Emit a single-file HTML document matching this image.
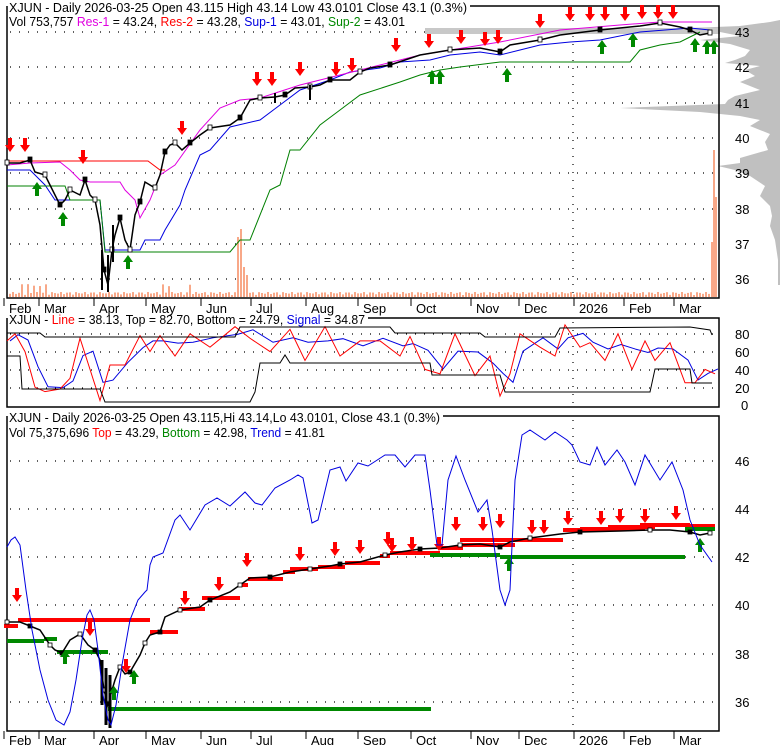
<!DOCTYPE html>
<html><head><meta charset="utf-8"><style>
html,body{margin:0;padding:0;background:#fff;}
body{width:780px;height:745px;overflow:hidden;position:relative;font-family:"Liberation Sans",sans-serif;}
svg{position:absolute;left:0;top:0;}
text{font-family:"Liberation Sans",sans-serif;font-size:13px;}
</style></head><body>
<svg id="s" width="780" height="745" viewBox="0 0 780 745">
<g id="bg"></g>
<g fill="none" stroke="#000" stroke-width="1.5">
<polyline points="7,6 7,298 719,298 719,6 470,6"/>
<polyline points="7,318 7,407 719,407 719,318 368,318"/>
<polyline points="7,416 7,731 719,731 719,416 443,416"/>
</g>
<g id="g"></g>
<text x="9" y="12" textLength="458" lengthAdjust="spacingAndGlyphs">XJUN - Daily 2026-03-25 Open 43.115  High 43.14  Low 43.0101  Close 43.1 (0.3%)</text>
<text x="9" y="26" textLength="396" lengthAdjust="spacingAndGlyphs">Vol 753,757 <tspan fill="#e000e0">Res-1</tspan> = 43.24, <tspan fill="#f00">Res-2</tspan> = 43.28, <tspan fill="#0000e0">Sup-1</tspan> = 43.01, <tspan fill="#080">Sup-2</tspan> = 43.01</text>
<text x="9" y="324" textLength="356" lengthAdjust="spacingAndGlyphs">XJUN - <tspan fill="#f00">Line</tspan> = 38.13, Top = 82.70, Bottom = 24.79, <tspan fill="#0000e0">Signal</tspan> = 34.87</text>
<text x="9" y="422" textLength="431" lengthAdjust="spacingAndGlyphs">XJUN - Daily 2026-03-25 Open 43.115,Hi 43.14,Lo 43.0101, Close 43.1 (0.3%)</text>
<text x="9" y="437" textLength="316" lengthAdjust="spacingAndGlyphs">Vol 75,375,696 <tspan fill="#f00">Top</tspan> = 43.29, <tspan fill="#080">Bottom</tspan> = 42.98, <tspan fill="#0000e0">Trend</tspan> = 41.81</text>
<g fill="#000">
<text x="735" y="37">43</text><text x="735" y="72">42</text><text x="735" y="108">41</text><text x="735" y="143">40</text><text x="735" y="178">39</text><text x="735" y="214">38</text><text x="735" y="249">37</text><text x="735" y="284">36</text>
<text x="735" y="339">80</text><text x="735" y="357">60</text><text x="735" y="375">40</text><text x="735" y="393">20</text><text x="741" y="410">0</text>
<text x="735" y="466">46</text><text x="735" y="514">44</text><text x="735" y="562">42</text><text x="735" y="610">40</text><text x="735" y="659">38</text><text x="735" y="707">36</text>
</g>
<g id="xl"></g>
</svg>
<script>
var NS="http://www.w3.org/2000/svg",G=document.getElementById('g'),BG=document.getElementById('bg');
function el(p,t,a,txt){var e=document.createElementNS(NS,t);for(var k in a)e.setAttribute(k,a[k]);if(txt)e.textContent=txt;p.appendChild(e);return e;}
function pl(pts,c,w,p){el(p||G,'polyline',{points:pts.map(function(q){return q.join(',')}).join(' '),fill:'none',stroke:c,'stroke-width':w||1});}
function dots(y){el(BG,'line',{x1:10,x2:716,y1:y,y2:y,stroke:'#000','stroke-dasharray':'1 8','stroke-width':1.2});}
[32,67,103,138,173,209,244,279].forEach(dots);
[334,352,370,388].forEach(dots);
[461,509,557,605,654,702].forEach(dots);
[[20,298],[322,405],[420,731]].forEach(function(r){el(BG,'line',{x1:573,x2:573,y1:r[0],y2:r[1],stroke:'#000','stroke-dasharray':'1 7','stroke-width':1.2});});
var prof=[[22,770],[26,740],[28,690],[32,720],[36,740],[40,700],[44,730],[50,750],[56,745],[60,735],[63,725],[66,760],[70,745],[76,755],[82,740],[90,760],[96,735],[100,728],[104,725],[108,620],[112,700],[116,740],[120,760],[126,750],[134,770],[142,765],[150,768],[158,740],[163,740],[166,718],[170,735],[176,750],[186,765],[196,760],[206,770],[216,772],[226,770],[240,775],[260,778],[285,778]];
var d='M780,20 ';prof.forEach(function(p){d+='L'+p[1]+','+p[0]+' ';});d+='L780,285 Z';
el(BG,'path',{d:d,fill:'#c0c0c0'});
el(BG,'rect',{x:425,y:28,width:295,height:6,fill:'#c8c8c8'});
for(var x=9;x<716;x+=3){var h=2+Math.abs(Math.sin(x*1.7))*3;if(x<60&&Math.sin(x)>0.7)h+=8;if(x>150&&x<200&&Math.sin(x*3)>0.8)h+=8;
el(G,'rect',{x:x,y:297-h,width:2,height:h,fill:'#f8a888'});}
[[237,60],[240,68],[243,30],[246,22],[711,55],[713,147],[715,100]].forEach(function(v){el(G,'rect',{x:v[0],y:297-v[1],width:2,height:v[1],fill:'#f8a888'});});
pl([[7,170],[30,170],[45,185],[55,200],[100,200],[105,250],[140,250],[145,240],[160,240],[165,230],[180,205],[185,190],[200,155],[210,150],[230,127],[260,120],[280,105],[300,90],[330,80],[350,72],[380,68],[400,62],[430,60],[450,55],[480,52],[500,55],[520,50],[540,45],[570,42],[600,40],[640,32],[690,28],[710,30]],'#0000e0');
pl([[7,186],[65,186],[70,200],[100,200],[105,252],[230,252],[240,240],[250,240],[270,190],[280,185],[290,150],[300,150],[320,125],[340,110],[360,95],[400,82],[420,75],[440,70],[460,67],[500,62],[630,62],[640,50],[660,45],[680,42],[700,32]],'#008000');
pl([[7,161],[148,161],[160,170],[165,170]],'#f00');
pl([[7,165],[30,163],[60,162],[70,170],[80,180],[90,182],[120,182],[125,190],[135,200],[140,218],[150,200],[160,175],[175,165],[200,130],[220,108],[240,100],[260,98],[300,85],[360,70],[420,55],[500,42],[560,30],[620,25],[660,22],[712,22]],'#e000e0');
var tp=[[7,163],[20,163],[30,160],[35,172],[45,175],[55,195],[60,205],[65,200],[70,190],[80,195],[85,180],[90,195],[95,200],[100,225],[104,270],[108,285],[112,250],[115,235],[120,218],[125,240],[130,250],[135,215],[140,202],[145,182],[155,188],[160,175],[165,152],[170,145],[175,143],[182,150],[190,143],[200,135],[210,128],[230,125],[240,118],[250,100],[260,98],[275,97],[285,95],[295,88],[310,87],[320,85],[330,80],[350,80],[360,72],[370,68],[390,65],[420,55],[450,50],[480,48],[500,52],[510,45],[540,40],[560,35],[600,30],[640,26],[660,23],[680,27],[690,30],[700,35],[710,33]];
pl(tp,'#000',1.5);
tp.forEach(function(q,i){if(i%2)return;el(G,'rect',{x:q[0]-2,y:q[1]-3,width:4,height:5,fill:(i%4?'#000':'#fff'),stroke:'#000','stroke-width':0.8});});
[[102,250,290],[108,255,292],[113,225,262],[275,93,103],[310,85,100]].forEach(function(c){el(G,'rect',{x:c[0]-1,y:c[1],width:2,height:c[2]-c[1],fill:'#000'});});
function da(x,y){el(G,'path',{d:'M'+(x-2)+','+y+'h4v7h3l-5,7l-5,-7h3z',fill:'#f00'});}
function ua(x,y){el(G,'path',{d:'M'+(x-2)+','+(y+14)+'h4v-7h3l-5,-7l-5,7h3z',fill:'#080'});}
[[10,138],[25,138],[83,150],[182,121],[257,72],[272,72],[300,62],[336,62],[352,58],[396,38],[429,34],[461,30],[485,32],[498,30],[540,14],[570,7],[590,7],[605,7],[625,7],[642,5],[658,5],[673,5]].forEach(function(a){da(a[0],a[1]);});
[[37,182],[63,212],[128,255],[432,70],[440,70],[507,68],[602,40],[633,33],[695,38],[707,40],[714,40]].forEach(function(a){ua(a[0],a[1]);});
function seg(x1,x2,y,c){el(G,'rect',{x:x1,y:y-2,width:x2-x1,height:4,fill:c});}
seg(4,18,626,'#f00');seg(18,150,620,'#f00');seg(150,178,632,'#f00');seg(179,205,609,'#f00');seg(202,240,598,'#f00');seg(238,248,585,'#f00');seg(248,283,579,'#f00');seg(283,295,572,'#f00');seg(290,318,569,'#f00');seg(318,345,567,'#f00');seg(345,380,563,'#f00');
seg(380,390,556,'#f00');seg(390,440,553,'#f00');seg(440,463,548,'#f00');seg(458,515,545,'#f00');seg(460,563,540,'#f00');seg(563,605,530,'#f00');seg(580,645,529,'#f00');seg(608,655,527,'#f00');seg(640,690,525,'#f00');seg(690,715,526,'#f00');
seg(7,44,641,'#080');seg(44,57,639,'#080');seg(57,108,652,'#080');seg(108,431,709,'#080');seg(430,500,555,'#080');seg(500,685,557,'#080');seg(685,715,529,'#080');
var bp=[[7,622],[20,622],[30,626],[40,630],[50,645],[55,650],[62,653],[70,640],[80,634],[88,645],[95,650],[100,660],[104,690],[108,705],[112,690],[115,680],[120,667],[125,674],[130,672],[140,655],[145,643],[150,635],[160,632],[165,617],[180,610],[200,607],[210,600],[230,592],[240,585],[250,578],[270,577],[290,572],[310,569],[330,566],[340,564],[360,562],[385,555],[400,552],[420,549],[440,548],[460,545],[480,544],[500,547],[510,542],[530,538],[560,534],[580,532],[620,531],[650,530],[670,530],[690,532],[700,535],[710,533]];
pl(bp,'#000',1.5);
bp.forEach(function(q,i){if(i%2)return;el(G,'rect',{x:q[0]-2,y:q[1]-2,width:4,height:4,fill:(i%4?'#000':'#fff'),stroke:'#000','stroke-width':0.8});});
[[102,660,705],[106,668,725],[110,675,728]].forEach(function(c){el(G,'rect',{x:c[0]-1.5,y:c[1],width:3,height:c[2]-c[1],fill:'#000'});});
[[17,588],[90,622],[126,659],[185,591],[219,577],[247,553],[300,547],[335,542],[360,540],[388,532],[392,538],[412,537],[439,537],[456,517],[483,517],[500,514],[532,520],[544,520],[568,511],[601,511],[620,509],[645,509],[676,506]].forEach(function(a){da(a[0],a[1]);});
[[65,650],[114,686],[134,670],[509,557],[700,538]].forEach(function(a){ua(a[0],a[1]);});
pl([[7,547],[11,540],[15,537],[20,545],[26,590],[32,630],[40,670],[48,700],[56,720],[64,725],[70,712],[76,680],[82,640],[87,615],[90,610],[94,620],[98,650],[103,695],[108,720],[111,725],[116,705],[122,665],[130,620],[138,600],[145,592],[147,590],[150,565],[153,557],[163,553],[175,520],[180,515],[190,530],[205,505],[217,498],[230,506],[245,492],[255,503],[262,505],[275,488],[290,480],[298,475],[303,478],[312,523],[318,520],[330,470],[340,467],[346,481],[358,463],[368,466],[385,455],[395,455],[405,467],[415,455],[425,455],[430,490],[437,545],[442,545],[448,480],[456,456],[465,480],[478,512],[487,500],[492,530],[500,590],[505,605],[510,590],[515,480],[522,435],[530,430],[545,440],[555,432],[567,440],[572,445],[580,462],[590,465],[597,447],[605,465],[617,450],[625,462],[635,485],[645,455],[660,480],[672,462],[683,490],[690,520],[700,545],[712,562]],'#0000e0');
function oy(v){return 405-v*0.89;}
var osc=[[7,72],[15,80],[25,60],[35,20],[45,15],[60,18],[70,30],[80,75],[90,40],[100,5],[110,45],[125,45],[140,78],[150,60],[160,78],[175,55],[190,80],[210,65],[235,88],[250,75],[270,60],[290,85],[305,50],[325,88],[340,55],[360,72],[380,72],[400,55],[410,77],[425,40],[440,35],[455,80],[475,33],[490,55],[500,10],[510,35],[520,80],[540,65],[555,55],[565,90],[580,65],[590,70],[605,50],[618,80],[632,40],[645,72],[655,50],[670,70],[685,25],[695,25],[705,40],[715,35]];
pl(osc.map(function(q,i){var v=i>0?(q[1]+osc[i-1][1])/2+3:q[1];return [q[0]+3,oy(v)]}),'#0000e0');
pl(osc.map(function(q){return [q[0],oy(q[1])]}),'#f00');
pl([[7,333],[40,333],[45,337],[235,337],[240,327],[390,327],[395,333],[480,333],[485,337],[555,337],[560,328],[690,327],[710,330],[712,335]],'#000');
pl([[7,356],[20,356],[22,389],[100,389],[105,402],[250,402],[255,392],[260,363],[280,363],[285,355],[290,363],[430,363],[432,375],[500,375],[505,392],[650,392],[655,369],[690,369],[692,383],[712,383]],'#000');
var XL=document.getElementById('xl');
var m=[[7,'Feb'],[42,'Mar'],[97,'Apr'],[149,'May'],[204,'Jun'],[254,'Jul'],[309,'Aug'],[361,'Sep'],[414,'Oct'],[474,'Nov'],[522,'Dec'],[577,'2026'],[627,'Feb'],[677,'Mar']];
m.forEach(function(a){[[298,313],[731,745]].forEach(function(r){el(XL,'line',{x1:a[0]-3,x2:a[0]-3,y1:r[0],y2:r[0]+8,stroke:'#000'});el(XL,'text',{x:a[0]+2,y:r[1]},a[1]);});});
</script>
</body></html>
